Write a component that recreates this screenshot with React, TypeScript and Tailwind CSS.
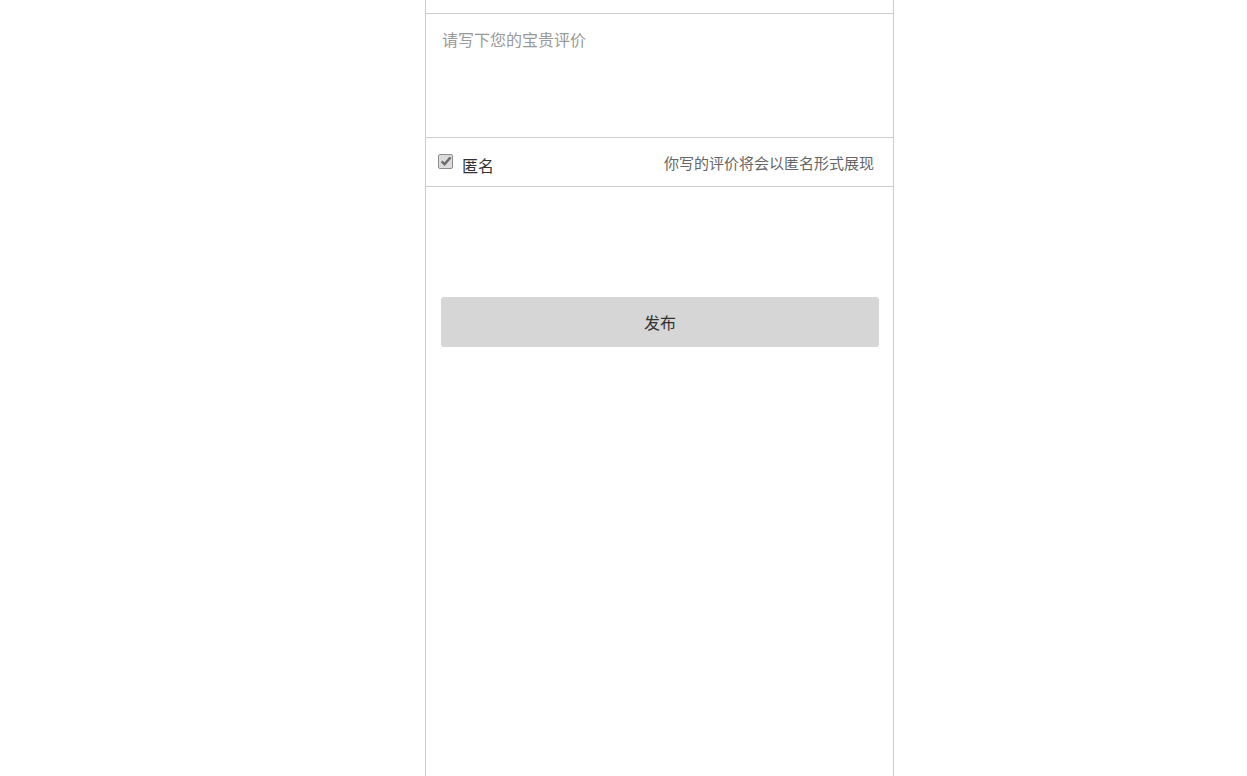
import { useState } from "react";

const App = () => {
    const [anonymous, setAnonymous] = useState(true);
    const [text, setText] = useState("");

    return (
        <div
            className="min-h-[776px] w-full bg-white"
            style={{ fontFamily: '"Microsoft YaHei", "Noto Sans CJK SC", sans-serif' }}
        >
            <div className="ml-[425px] flex min-h-[776px] w-[469px] flex-col border-x border-[#cccccc]">
                <div className="h-[14px] border-b border-[#cccccc]" />

                <div className="h-[124px] border-b border-[#cccccc] px-4 pt-[13px]">
                    <textarea
                        value={text}
                        onChange={(e) => setText(e.target.value)}
                        placeholder="请写下您的宝贵评价"
                        className="h-full w-full resize-none bg-transparent text-[16px] leading-[24px] text-[#333] outline-none placeholder:text-[#999]"
                    />
                </div>

                <div className="flex h-[49px] items-center justify-between border-b border-[#cccccc] pr-[19px] pl-3">
                    <label className="flex cursor-pointer items-center">
                        <span
                            onClick={() => setAnonymous(!anonymous)}
                            className="mt-[-2px] flex h-[15px] w-[15px] items-center justify-center rounded-[2px] border border-[#8c8c8c] bg-[#dcdcdc]"
                        >
                            {anonymous && (
                                <svg width="12" height="12" viewBox="0 0 11 11">
                                    <path d="M1.5 5.8 L4.2 8.5 L9.6 2.2" fill="none" stroke="#6b6b6b" strokeWidth="2.2" />
                                </svg>
                            )}
                        </span>
                        <span className="ml-[9px] mt-[6px] text-[16px] text-[#333]">匿名</span>
                    </label>
                    <span className="mt-[3px] text-[15px] text-[#666]">你写的评价将会以匿名形式展现</span>
                </div>

                <div className="px-[15px] pt-[110px]">
                    <button
                        type="button"
                        className="h-[50px] w-[438px] rounded-[3px] bg-[#d6d6d6] text-[16px] text-[#333]"
                    >
                        发布
                    </button>
                </div>
            </div>
        </div>
    );
};

export default App;
